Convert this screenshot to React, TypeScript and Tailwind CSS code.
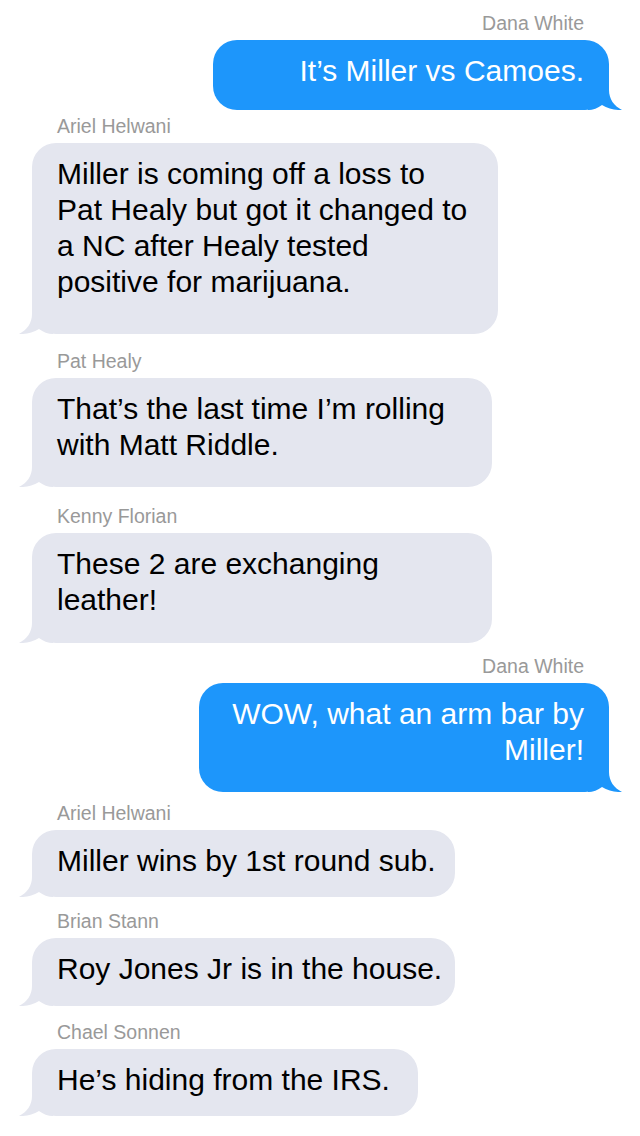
const font = { fontFamily: '"Liberation Sans", Arial, sans-serif' };

type Msg = {
  from: string;
  mine: boolean;
  lines: string[];
  w: string;
  pb: string;
  mb: string;
};

// widths/paddings measured off the reference, lines broken as shown there
const messages: Msg[] = [
  { from: 'Dana White', mine: true, lines: ['It’s Miller vs Camoes.'], w: 'w-[396px]', pb: 'pb-[21px]', mb: 'mb-[5px]' },
  {
    from: 'Ariel Helwani',
    mine: false,
    lines: ['Miller is coming off a loss to', 'Pat Healy but got it changed to', 'a NC after Healy tested', 'positive for marijuana.'],
    w: 'w-[466px]',
    pb: 'pb-[34px]',
    mb: 'mb-[16px]',
  },
  { from: 'Pat Healy', mine: false, lines: ['That’s the last time I’m rolling', 'with Matt Riddle.'], w: 'w-[460px]', pb: 'pb-[24px]', mb: 'mb-[18px]' },
  { from: 'Kenny Florian', mine: false, lines: ['These 2 are exchanging', 'leather!'], w: 'w-[460px]', pb: 'pb-[25px]', mb: 'mb-[12px]' },
  { from: 'Dana White', mine: true, lines: ['WOW, what an arm bar by', 'Miller!'], w: 'w-[410px]', pb: 'pb-[24px]', mb: 'mb-[10px]' },
  { from: 'Ariel Helwani', mine: false, lines: ['Miller wins by 1st round sub.'], w: 'w-[423px]', pb: 'pb-[18px]', mb: 'mb-[13px]' },
  { from: 'Brian Stann', mine: false, lines: ['Roy Jones Jr is in the house.'], w: 'w-[423px]', pb: 'pb-[19px]', mb: 'mb-[15px]' },
  { from: 'Chael Sonnen', mine: false, lines: ['He’s hiding from the IRS.'], w: 'w-[386px]', pb: 'pb-[18px]', mb: 'mb-0' },
];

function Tail({ mine }: { mine: boolean }) {
  return (
    <svg
      viewBox="0 0 34 26"
      className={mine ? 'absolute -right-[13px] bottom-0 h-[26px] w-[34px] -scale-x-100' : 'absolute -left-[13px] bottom-0 h-[26px] w-[34px]'}
      aria-hidden="true"
    >
      <path
        d="M13 0 L13 6 C13 15 8 22 0 26 C7 26.4 14 24.6 20 21 C24 24 29 26 34 26 L34 0 Z"
        fill={mine ? '#1d96fb' : '#e4e6ef'}
      />
    </svg>
  );
}

function Bubble({ m }: { m: Msg }) {
  return (
    <div className={`flex flex-col ${m.mine ? 'items-end' : 'items-start'} ${m.mb}`}>
      <div className={`h-[22px] text-[19.5px] leading-[22px] text-[#999999] mb-[6px] ${m.mine ? 'pr-[25px]' : 'pl-[25px]'}`}>
        {m.from}
      </div>
      <div
        className={`relative rounded-[24px] pt-[13px] text-[30px] leading-[36px] ${m.w} ${m.pb} ${
          m.mine ? 'bg-[#1d96fb] text-white text-right pr-[25px] pl-[20px]' : 'bg-[#e4e6ef] text-black pl-[25px] pr-[20px]'
        }`}
      >
        <Tail mine={m.mine} />
        <div className="relative">
          {m.lines.map((l) => (
            <div key={l} className="whitespace-nowrap">
              {l}
            </div>
          ))}
        </div>
      </div>
    </div>
  );
}

export default function App() {
  return (
    <div className="min-h-[1136px] w-[640px] bg-white pt-[12px] pl-[32px] pr-[31px]" style={font}>
      {messages.map((m, i) => (
        <Bubble key={i} m={m} />
      ))}
    </div>
  );
}
